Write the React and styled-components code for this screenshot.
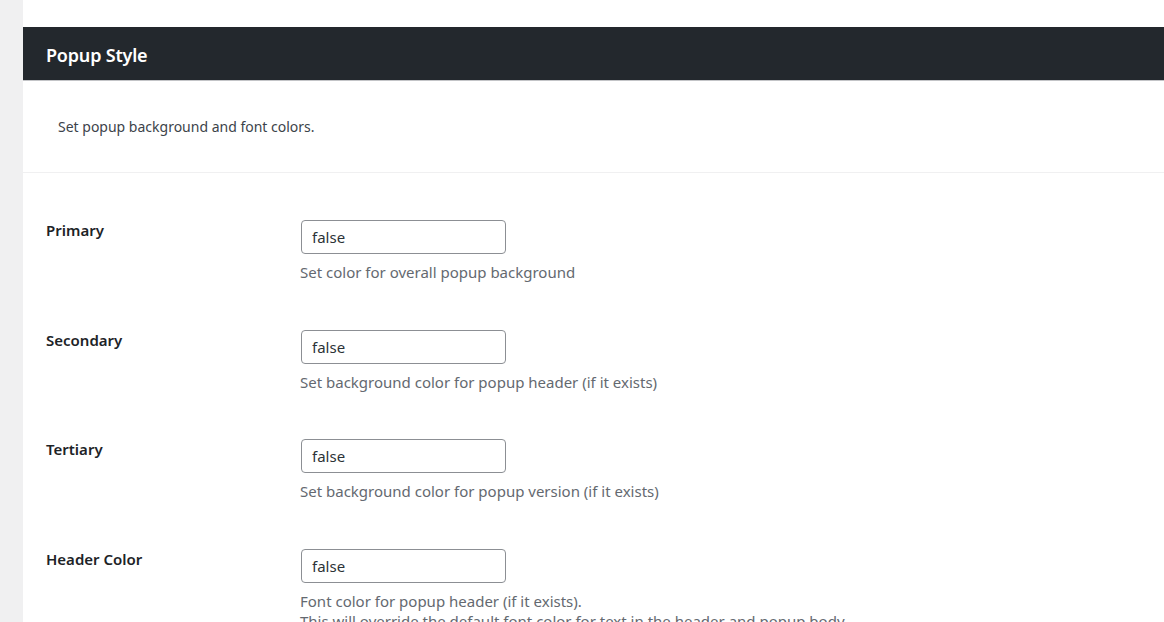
import React from "react";
import styled, { createGlobalStyle } from "styled-components";

const GlobalStyle = createGlobalStyle`
  html, body {
    margin: 0;
    padding: 0;
    background: #ffffff;
    font-family: "Noto Sans", "Open Sans", Arial, sans-serif;
    overflow: hidden;
  }
`;

const Page = styled.div`
  display: flex;
  width: 100vw;
  height: 100vh;
`;

const Sidebar = styled.div`
  width: 23px;
  flex-shrink: 0;
  background: #f0f0f1;
`;

const Main = styled.div`
  flex: 1;
  padding-top: 27px;
  background: #ffffff;
`;

const Header = styled.div`
  height: 53px;
  display: flex;
  align-items: center;
  padding-left: 23px;
  background: #23282d;
  border-bottom: 1px solid #c3c4c7;
`;

const Title = styled.h2`
  margin: 0;
  padding-top: 2px;
  font-size: 18px;
  font-weight: 600;
  color: #ffffff;
  letter-spacing: -0.2px;
`;

const Intro = styled.div`
  padding: 36px 35px 35px;
  border-bottom: 1px solid #f0f0f1;
`;

const IntroText = styled.p`
  margin: 0;
  font-size: 14px;
  line-height: 20px;
  color: #3c434a;
`;

const Form = styled.div`
  padding: 47px 23px 0;
  display: flex;
  flex-direction: column;
  gap: 47.7px;
`;

const Row = styled.div`
  display: grid;
  grid-template-columns: 254px 1fr;
  align-items: start;
`;

const Label = styled.label`
  font-size: 15px;
  font-weight: 600;
  line-height: 20px;
  color: #1d2327;
`;

const Field = styled.div`
  display: flex;
  flex-direction: column;
  gap: 8px;
`;

const Input = styled.input`
  box-sizing: border-box;
  width: 205px;
  height: 34px;
  margin-left: 1px;
  padding: 0 10px;
  border: 1px solid #8c8f94;
  border-radius: 4px;
  font-family: inherit;
  font-size: 15px;
  color: #2c3338;
  background: #ffffff;
  outline: none;
`;

const Help = styled.p`
  margin: 0;
  font-size: 15px;
  line-height: 20px;
  color: #646970;
`;

const fields = [
  { label: "Primary", help: ["Set color for overall popup background"] },
  { label: "Secondary", help: ["Set background color for popup header (if it exists)"] },
  { label: "Tertiary", help: ["Set background color for popup version (if it exists)"] },
  {
    label: "Header Color",
    help: [
      "Font color for popup header (if it exists).",
      "This will override the default font color for text in the header and popup body.",
    ],
  },
];

export default function App() {
  return (
    <Page>
      <GlobalStyle />
      <Sidebar />
      <Main>
        <Header>
          <Title>Popup Style</Title>
        </Header>
        <Intro>
          <IntroText>Set popup background and font colors.</IntroText>
        </Intro>
        <Form>
          {fields.map((f) => (
            <Row key={f.label}>
              <Label>{f.label}</Label>
              <Field>
                <Input defaultValue="false" />
                <Help>
                  {f.help.map((line, i) => (
                    <React.Fragment key={i}>
                      {i > 0 && <br />}
                      {line}
                    </React.Fragment>
                  ))}
                </Help>
              </Field>
            </Row>
          ))}
        </Form>
      </Main>
    </Page>
  );
}
